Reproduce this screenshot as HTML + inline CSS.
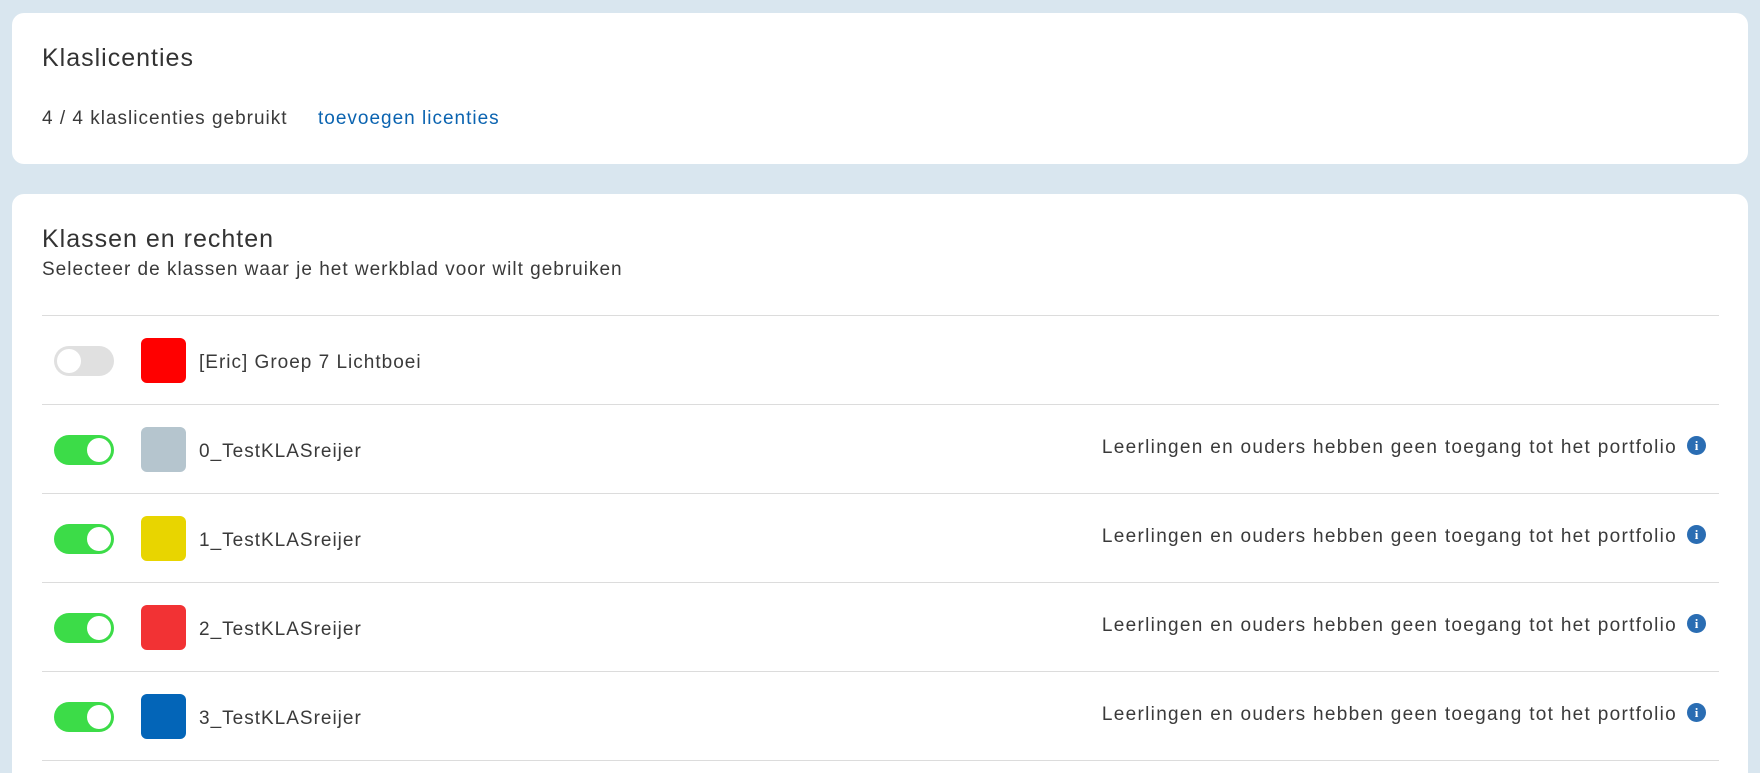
<!DOCTYPE html>
<html style="width:1760px;height:773px;overflow:hidden"><head><meta charset="utf-8"><style>
*{box-sizing:border-box;margin:0;padding:0}
body{width:1760px;height:773px;overflow:hidden;background:#d9e6ef;font-family:"Liberation Sans",sans-serif;color:#3a3a3a;position:relative;letter-spacing:1px}
.card{position:absolute;left:12px;width:1736px;background:#fff;border-radius:12px}
.t{position:absolute;white-space:nowrap}
.row{position:absolute;left:42px;width:1677px;height:89px;border-top:1px solid #dcdcdc}
.tg{position:absolute;left:12px;top:30px;width:60px;height:30px;border-radius:15px;background:#3cdc48}
.tg::after{content:"";position:absolute;top:3px;right:3px;width:24px;height:24px;border-radius:50%;background:#fff}
.tg.off{background:#e0e0e0}.tg.off::after{right:auto;left:3px}
.sw{position:absolute;left:99px;top:22px;width:45px;height:45px;border-radius:6px}
.nm{position:absolute;left:157px;top:36px;font-size:19px}
.rt{position:absolute;right:42px;top:32px;font-size:19px;letter-spacing:1.3px}
.ic{position:absolute;right:13px;top:31px;width:19px;height:19px;border-radius:50%;background:#2a6db3;color:#fff;font:bold 13px/19px "Liberation Serif",serif;text-align:center;letter-spacing:0}
</style></head><body>
<div class="card" style="top:13px;height:151px"></div>
<div class="t" style="left:42px;top:44px;font-size:25px;color:#333">Klaslicenties</div>
<div class="t" style="left:42px;top:108px;font-size:19px">4 / 4 klaslicenties gebruikt</div>
<div class="t" style="left:318px;top:108px;font-size:19px;color:#0a63b0">toevoegen licenties</div>
<div class="card" style="top:194px;height:600px"></div>
<div class="t" style="left:42px;top:225px;font-size:25px;color:#333">Klassen en rechten</div>
<div class="t" style="left:42px;top:259px;font-size:19px">Selecteer de klassen waar je het werkblad voor wilt gebruiken</div>
<div class="row" style="top:315px"><div class="tg off"></div><div class="sw" style="background:#ff0000"></div><div class="nm">[Eric] Groep 7 Lichtboei</div></div>
<div class="row" style="top:404px"><div class="tg"></div><div class="sw" style="background:#b5c5ce"></div><div class="nm">0_TestKLASreijer</div><div class="rt">Leerlingen en ouders hebben geen toegang tot het portfolio</div><div class="ic">i</div></div>
<div class="row" style="top:493px"><div class="tg"></div><div class="sw" style="background:#e8d500"></div><div class="nm">1_TestKLASreijer</div><div class="rt">Leerlingen en ouders hebben geen toegang tot het portfolio</div><div class="ic">i</div></div>
<div class="row" style="top:582px"><div class="tg"></div><div class="sw" style="background:#f23234"></div><div class="nm">2_TestKLASreijer</div><div class="rt">Leerlingen en ouders hebben geen toegang tot het portfolio</div><div class="ic">i</div></div>
<div class="row" style="top:671px"><div class="tg"></div><div class="sw" style="background:#0365b8"></div><div class="nm">3_TestKLASreijer</div><div class="rt">Leerlingen en ouders hebben geen toegang tot het portfolio</div><div class="ic">i</div></div>
<div class="row" style="top:760px;height:13px"></div>
</body></html>
